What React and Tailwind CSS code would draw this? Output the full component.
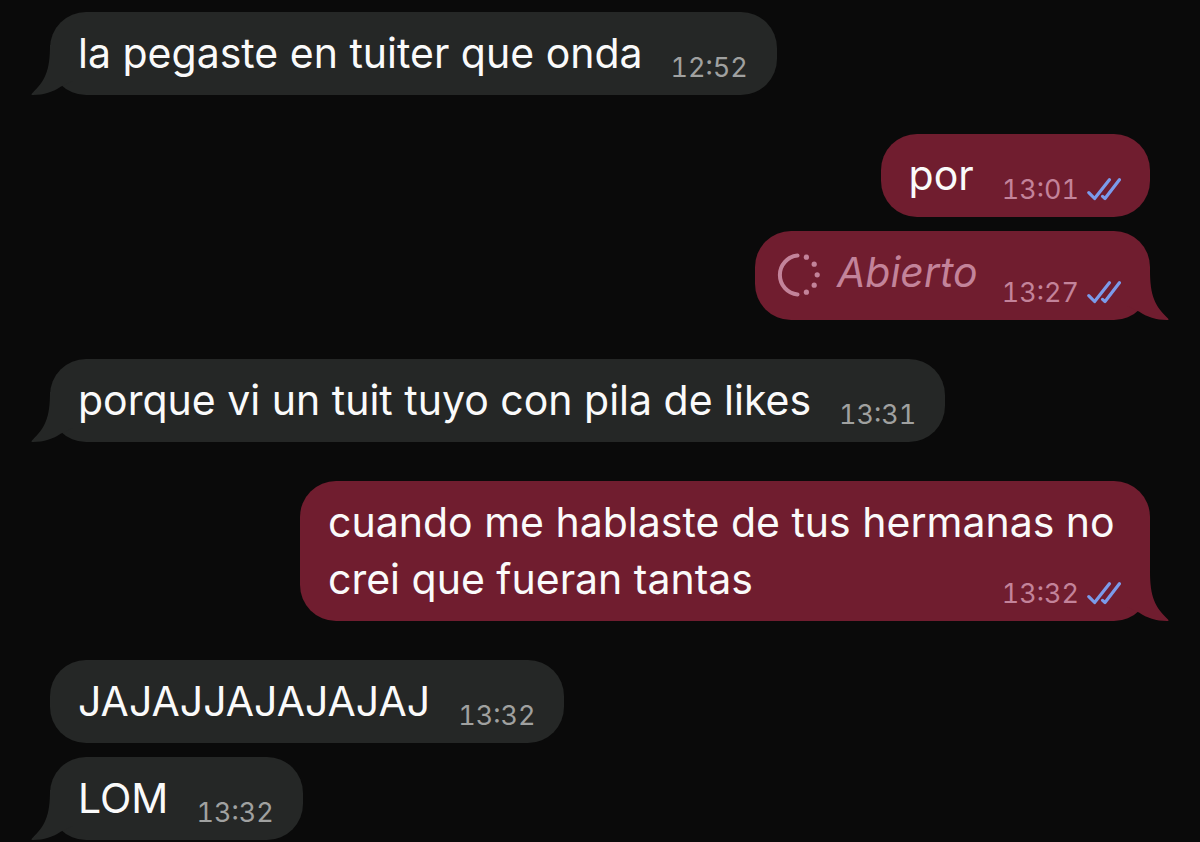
import clsx from 'clsx';

const messages = [
    { id: 1, text: 'la pegaste en tuiter que onda', time: '12:52', tail: true },
    { id: 2, text: 'por', time: '13:01', mine: true },
    { id: 3, text: 'Abierto', time: '13:27', mine: true, tail: true, opened: true },
    { id: 4, text: 'porque vi un tuit tuyo con pila de likes', time: '13:31', tail: true },
    { id: 5, text: 'cuando me hablaste de tus hermanas no crei que fueran tantas', time: '13:32', mine: true, tail: true },
    { id: 6, text: 'JAJAJJAJAJAJAJ', time: '13:32' },
    { id: 7, text: 'LOM', time: '13:32', tail: true },
];

const ReadTicks = () => (
    <svg viewBox="0 0 34 24" className="w-[34px] h-6 text-[#7b9bea]" fill="none" stroke="currentColor" strokeWidth="3.2" strokeLinecap="round" strokeLinejoin="round" role="img" aria-label="Leído">
        <path d="M1.8 14.6 L7.6 20.5 L22.4 1.8" />
        <path d="M15.6 18.4 L18 20.5 L32.4 1.8" />
    </svg>
);

const OpenedIcon = () => (
    <svg viewBox="0 0 46 46" className="w-[46px] h-[46px] mt-1 shrink-0 text-[#c3839a]" fill="none" aria-hidden="true">
        <path d="M22.5 3.5 A19.6 19.6 0 0 0 22.5 42.5" stroke="currentColor" strokeWidth="4" strokeLinecap="round" />
        <g fill="currentColor">
            <circle cx="31.4" cy="5.2" r="2.6" />
            <circle cx="39.2" cy="12.2" r="2.6" />
            <circle cx="42.2" cy="22.8" r="2.6" />
            <circle cx="39.2" cy="33.2" r="2.6" />
            <circle cx="31.4" cy="40.2" r="2.6" />
        </g>
    </svg>
);

const Tail = ({ mine }) => (
    <svg
        viewBox="0 0 42 50"
        className={clsx(
            'absolute bottom-0 w-[42px] h-[50px]',
            mine ? '-right-[19px] -scale-x-100 text-[#701d2f]' : '-left-[19px] text-[#252726]'
        )}
        fill="currentColor"
        aria-hidden="true"
    >
        <path d="M19 0 C19 26 14 36 1 48.4 C0 49.4 0.4 50 2 50 C13 50 22 47 30 41.5 L42 36 L42 0 Z" />
    </svg>
);

const Message = ({ message }) => {
    const { text, time, mine, tail, opened } = message;

    return (
        <li className={clsx('flex last:mb-0', mine ? 'justify-end' : 'justify-start', tail ? 'mb-[39px]' : 'mb-[14px]')}>
            <div
                className={clsx(
                    'relative flow-root rounded-[36px] py-[13px] pr-[29px]',
                    mine ? 'max-w-[850px] bg-[#701d2f]' : 'max-w-[920px] bg-[#252726]',
                    opened ? 'pl-5' : 'pl-7'
                )}
            >
                {tail && <Tail mine={mine} />}
                {opened ? (
                    <span className="float-left flex items-center gap-4 italic text-[#c3839a]">
                        <OpenedIcon />
                        {text}
                    </span>
                ) : (
                    <span className="text-[#fafafa]">{text}</span>
                )}
                <span
                    className={clsx(
                        'float-right flex items-center gap-2 text-[27px] leading-7 tabular-nums',
                        mine ? 'text-[#c3839a]' : 'text-[#a0a1a0]',
                        opened ? 'mt-[35px] ml-6' : 'mt-[29px] ml-7'
                    )}
                >
                    <time>{time}</time>
                    {mine && <ReadTicks />}
                </span>
            </div>
        </li>
    );
};

export default function App() {
    return (
        <main className="min-h-screen bg-[#0a0a0a] px-[50px] pt-3 font-['Inter',sans-serif] text-[41px] leading-[57px]">
            <ul>
                {messages.map((message) => (
                    <Message key={message.id} message={message} />
                ))}
            </ul>
        </main>
    );
}
